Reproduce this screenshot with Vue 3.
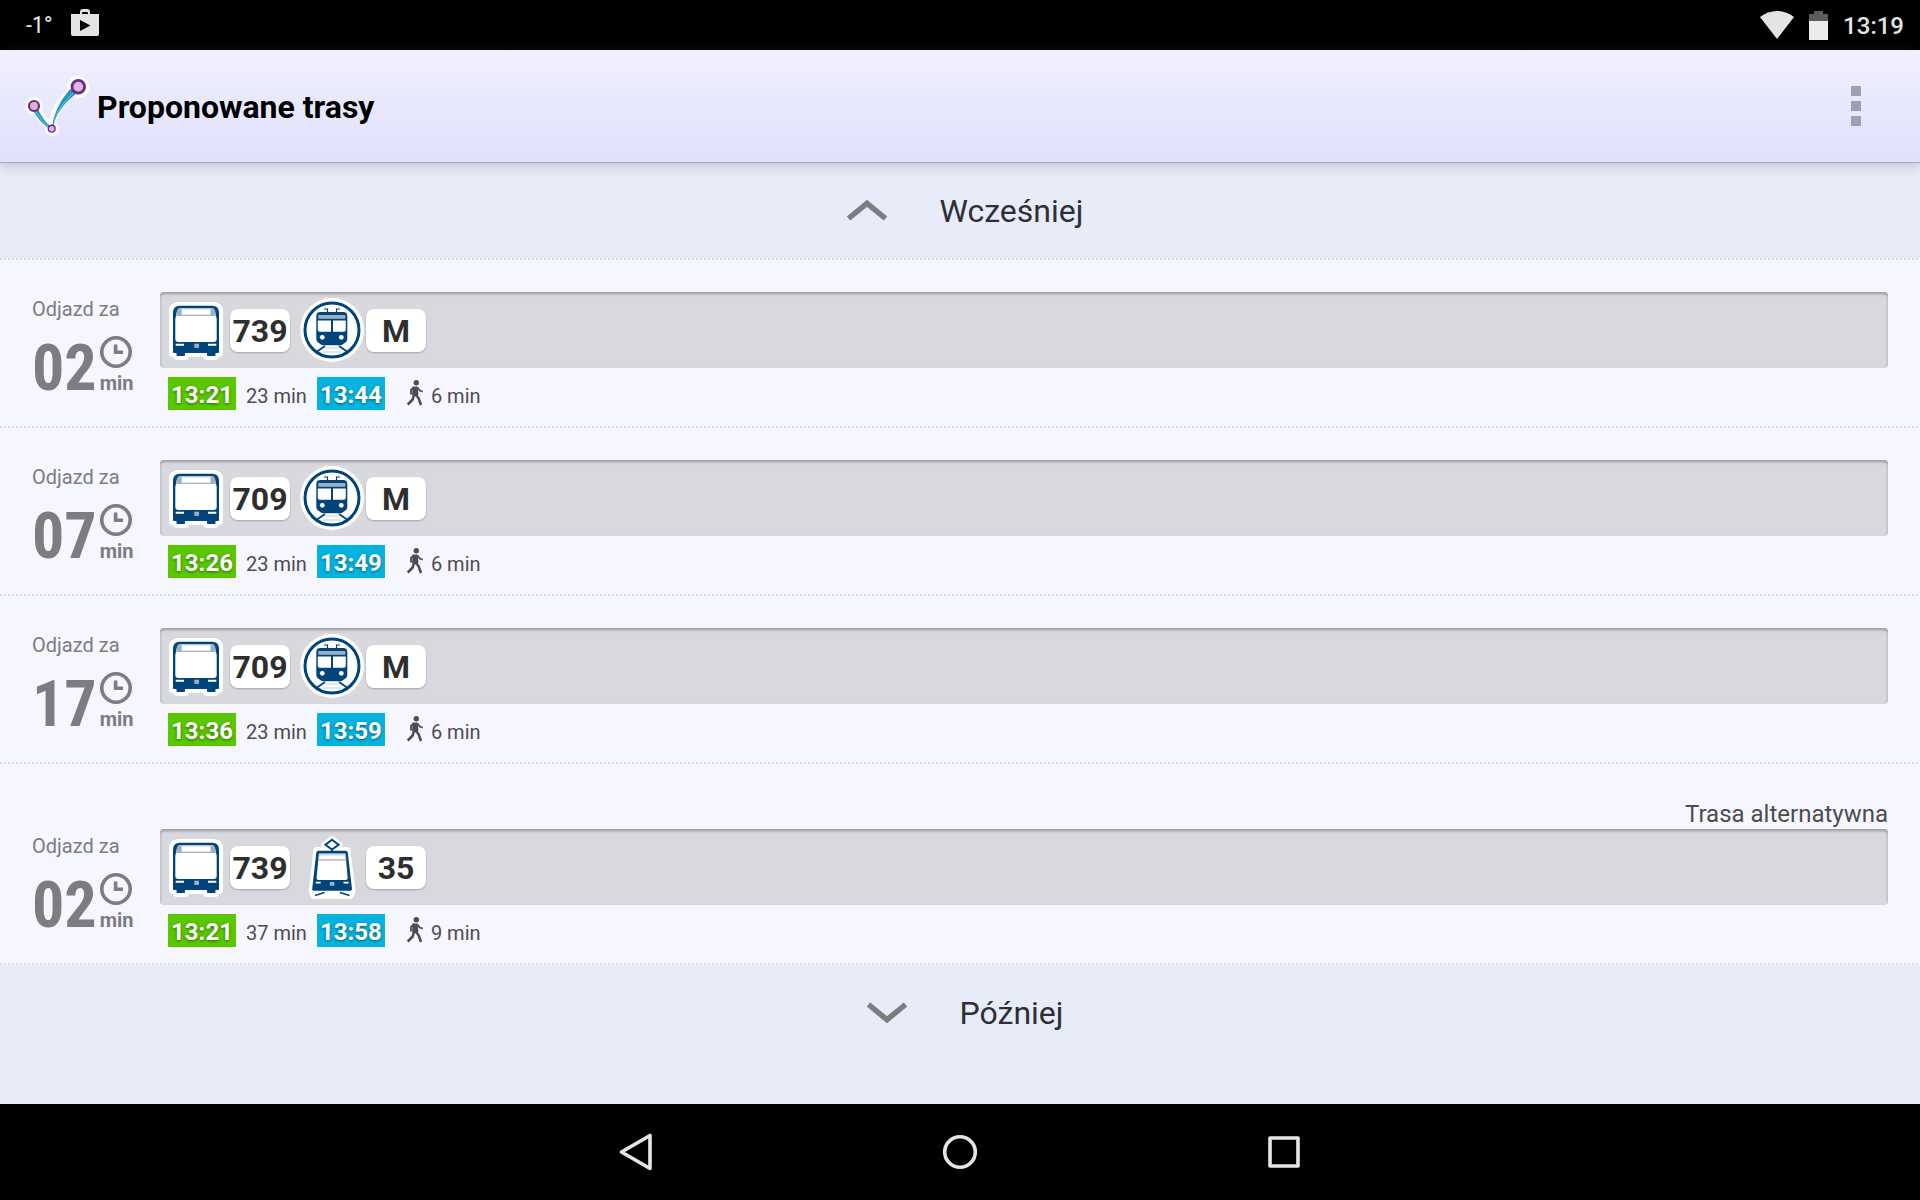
<script setup>
import { ref } from 'vue';

/**
 * routes:
 * - wait: minutes left to departure
 * - legs: vehicles in order (kind: bus | metro | tram)
 * - alt: label shown over an alternative route
 */
const routes = ref([
  {
    wait: '02', start: '13:21', ride: '23 min', end: '13:44', walk: '6 min',
    legs: [{ kind: 'bus', line: '739' }, { kind: 'metro', line: 'M' }]
  },
  {
    wait: '07', start: '13:26', ride: '23 min', end: '13:49', walk: '6 min',
    legs: [{ kind: 'bus', line: '709' }, { kind: 'metro', line: 'M' }]
  },
  {
    wait: '17', start: '13:36', ride: '23 min', end: '13:59', walk: '6 min',
    legs: [{ kind: 'bus', line: '709' }, { kind: 'metro', line: 'M' }]
  },
  {
    wait: '02', start: '13:21', ride: '37 min', end: '13:58', walk: '9 min', alt: 'Trasa alternatywna',
    legs: [{ kind: 'bus', line: '739' }, { kind: 'tram', line: '35' }]
  }
]);
</script>

<template>
  <div class="screen">
    <!-- system status bar -->
    <div class="status-bar">
      <div class="status-group left">
        <span class="temp">-1°</span>
        <svg class="store" width="28" height="28" viewBox="0 0 28 28">
          <path fill="#e4e4e4" fill-rule="evenodd" d="M0 5h9V3q0-3 3-3h4q3 0 3 3v2h9v20q0 2-2 2H2q-2 0-2-2zM11 5h6V4q0-1-1-1h-4q-1 0-1 1zM9 11v11l10.500-5.500z" />
        </svg>
      </div>
      <div class="status-group right">
        <svg width="34" height="28" viewBox="0 0 34 28">
          <path fill="#e4e4e4" d="M0 6C10-2 24-2 34 6L17 28z" />
        </svg>
        <svg width="19" height="29" viewBox="0 0 19 29">
          <path fill="#5c5c5c" d="M5 0h9v3h5v7H0V3h5z" />
          <path fill="#ececec" d="M0 10h19v19H0z" />
        </svg>
        <span class="clock-text">13:19</span>
      </div>
    </div>

    <!-- app bar -->
    <header class="app-bar">
      <svg class="logo" width="66" height="64" viewBox="24 74 66 64">
        <g fill="#fff" stroke="#fff" stroke-width="6" stroke-linejoin="round">
          <path d="M34 108Q40 120 51 129 56 104 77 90L71 90Q53 107 51 126 42 118 37 108z" />
          <circle cx="78" cy="87" r="8" />
          <circle cx="34" cy="106" r="6" />
          <circle cx="52" cy="129" r="4" />
        </g>
        <path fill="#2596be" d="M33 110Q39 122 50 129L51 127Q42 119 38 109zM53 127Q57 108 77 93L70 89Q54 108 52 127z" />
        <path fill="none" stroke="#7cc4da" d="M36 112Q41 121 49 127M54 121Q59 106 73 93" />
        <g fill="#dcb5dd" stroke="#6b2c87">
          <circle cx="78.300" cy="86.700" r="6.300" stroke-width="2.800" />
          <circle cx="34" cy="106" r="5" stroke-width="2.200" />
          <circle cx="51.700" cy="128.700" r="3.400" stroke-width="1.400" />
        </g>
      </svg>
      <h1>Proponowane trasy</h1>
      <button class="menu" type="button" aria-label="Menu">
        <i></i><i></i><i></i>
      </button>
    </header>

    <main>
      <button class="shift" type="button">
        <svg width="60" height="24" viewBox="0 0 60 24">
          <path fill="none" stroke="#7c7c81" stroke-width="5.500" d="M11.500 19.500L30 4.300l18.500 15.200" />
        </svg>
        <span>Wcześniej</span>
      </button>

      <ul class="routes">
        <li v-for="(r, idx) in routes" :key="idx" class="route">
          <div v-if="r.alt" class="alt">{{ r.alt }}</div>
          <div class="route-body">
            <div class="departure">
              <div class="caption">Odjazd za</div>
              <div class="wait">
                <strong>{{ r.wait }}</strong>
                <div class="unit">
                  <svg width="32" height="32" viewBox="0 0 32 32">
                    <circle cx="16" cy="16" r="14.200" fill="none" stroke="#7c7c81" stroke-width="3.600" />
                    <path fill="none" stroke="#7c7c81" stroke-width="3.600" d="M15.600 8.500V16.300H23" />
                  </svg>
                  <span>min</span>
                </div>
              </div>
            </div>

            <div class="details">
              <div class="track">
                <div v-for="leg in r.legs" :key="leg.kind" class="leg">
                  <svg v-if="leg.kind === 'bus'" width="64" height="64" viewBox="2 0 64 64">
                    <path fill="#fff" stroke="#fff" stroke-width="8" stroke-linejoin="round" d="M11 14q0-6 6-6h34q6 0 6 6v41h-4v3h-8v-3H23v3h-8v-3h-4z" />
                    <path fill="#014479" d="M11 15q0-7.300 7-7.300h32q7 0 7 7.300v39q0 1-1 1h-2.500v2q0 1-1 1H46q-1 0-1-1v-2H23v2q0 1-1 1h-6.500q-1 0-1-1v-2H12q-1 0-1-1z" />
                    <path fill="#fff" d="M13.300 21L15 13q.600-3 4-3h30q3.400 0 4 3l1.700 8v20q0 3-3 3H16.300q-3 0-3-3z" />
                    <path fill="#9fb0c3" d="M15 13q.600-2.700 4-2.700h30q3.400 0 4 2.700l.800 5H14.200z" />
                    <path fill="#fff" d="M19.700 11.300H48.500v5.400H19.700zM13.700 45.700h8.300v2h-8.300zM46 45.700h8.300v2H46z" />
                    <path fill="#9fb0c3" d="M32.300 45.700H37v4.200h-4.700z" />
                  </svg>
                  <svg v-else-if="leg.kind === 'metro'" width="64" height="64" viewBox="2 0 64 64">
                    <circle cx="34" cy="32" r="32" fill="#fff" />
                    <circle cx="34" cy="32" r="27" fill="none" stroke="#014479" stroke-width="3" />
                    <path fill="none" stroke="#014479" stroke-width="1.200" d="M29.500 15v-4h-3.500M38.500 15v-4H42" />
                    <path fill="#014479" d="M18.300 18q0-4 4-4h23q4 0 4 4v23q0 2-1.500 3.200-3.500 3-6 3H26q-3 0-6.200-3-1.500-1.200-1.500-3.200z" />
                    <path fill="#9fb0c3" d="M20.300 17h27v3.800h-27z" />
                    <path fill="#fff" d="M19.800 22.500H33v11.300H21.800q-2 0-2-2zM35 22.500h12.800v9.300q0 2-2 2H35z" />
                    <circle cx="24.300" cy="39.300" r="2.400" fill="#fff" />
                    <circle cx="43.300" cy="39.300" r="2.400" fill="#fff" />
                    <path fill="none" stroke="#014479" stroke-width="1.800" d="M27 48l-8 5.500M41 48l8 5.500" />
                    <path fill="none" stroke="#c3cdd9" d="M28 50h12M25 54h18" />
                  </svg>
                  <svg v-else width="64" height="64" viewBox="2 0 64 64">
                    <path fill="#fff" stroke="#fff" stroke-width="7" stroke-linejoin="round" d="M34 4.500l7 5.500-5 4v1.500h13L54 56l-2 4.500H16L14.300 56l4.500-40.500H32V14l-5-4z" />
                    <path fill="none" stroke="#014479" stroke-width="2" d="M34 4.800l6.600 5L34 14.500l-6.600-4.700zM34 14v3" />
                    <path fill="#014479" d="M20.500 15.700h27q2 0 2.300 2L54 54q0 1.700-1.500 1.700h-37Q14 55.700 14.200 54L18.300 17.700q.200-2 2.200-2z" />
                    <path fill="#fff" d="M21 18.500h26.500L49.700 43q0 2-2 2H20.500q-2 0-2-2z" />
                    <path fill="#9fb0c3" d="M20.600 19.500h27.300l.600 6H20z" />
                    <path fill="#fff" d="M21.500 20.300h25.500l.400 4H21z" />
                    <path fill="#fff" d="M17.700 46.800h5v1.800h-5zM45.500 46.800h5v1.800h-5z" />
                    <path fill="#9fb0c3" d="M31.800 47h4.600v3.800h-4.600z" />
                    <path fill="none" stroke="#014479" stroke-width="1.800" d="M17 60.500l9.500-3M51.500 60.500l-9.500-3" />
                  </svg>
                  <span class="line">{{ leg.line }}</span>
                </div>
              </div>

              <div class="times">
                <span class="time start">{{ r.start }}</span>
                <span class="ride">{{ r.ride }}</span>
                <span class="time end">{{ r.end }}</span>
                <svg class="walker" width="16" height="26" viewBox="0 0 16 26">
                  <circle cx="9.300" cy="2.700" r="2.700" fill="#4c4c50" />
                  <path fill="#4c4c50" d="M5.500 6.500h5l1 8-3 2-3.300-2z" />
                  <path fill="none" stroke="#4c4c50" stroke-width="1.800" stroke-linejoin="round" d="M6.500 7.500L4 10v4.500M10.500 7.500l2.200 3 3 1.200" />
                  <path fill="none" stroke="#4c4c50" stroke-width="2.500" d="M7 14l-1.300 5.500-5 5M8.500 14l3.200 4.500 2.300 6.500" />
                </svg>
                <span class="walk">{{ r.walk }}</span>
              </div>
            </div>
          </div>
        </li>
      </ul>

      <button class="shift" type="button">
        <svg width="60" height="24" viewBox="0 0 60 24">
          <path fill="none" stroke="#7c7c81" stroke-width="5.500" d="M11.500 3.500L30 18.700 48.500 3.500" />
        </svg>
        <span>Później</span>
      </button>
    </main>

    <!-- system navigation -->
    <nav class="nav-bar">
      <button type="button" aria-label="Wstecz">
        <svg width="40" height="40" viewBox="0 0 40 40">
          <path fill="none" stroke="#e6e6e6" stroke-width="3.600" stroke-linejoin="round" d="M34 3.500v33L5.500 20z" />
        </svg>
      </button>
      <button type="button" aria-label="Ekran główny">
        <svg width="40" height="40" viewBox="0 0 40 40">
          <circle cx="20" cy="20" r="15.300" fill="none" stroke="#e6e6e6" stroke-width="3.600" />
        </svg>
      </button>
      <button type="button" aria-label="Ostatnie">
        <svg width="40" height="40" viewBox="0 0 40 40">
          <rect x="6" y="6" width="28" height="28" fill="none" stroke="#e6e6e6" stroke-width="3.600" stroke-linejoin="round" />
        </svg>
      </button>
    </nav>
  </div>
</template>

<style>
body { margin:0; background:#000; }
</style>

<style scoped>
.screen { --muted:#7c7c81; --panel:#e8ebf8; display:flex; flex-direction:column; min-height:100vh; font-family:Roboto, "Noto Sans", sans-serif; color:#4c4c50; }
svg { display:block; flex:none; overflow:visible; }
button { border:0; padding:0; background:none; font:inherit; color:inherit; cursor:pointer; }

/* Status bar */
.status-bar { height:50px; padding:0 16px 0 26px; display:flex; justify-content:space-between; align-items:center; background:#000; color:#e4e4e4; }
.status-group { display:flex; align-items:center; }
.left { gap:18px; }
.right { gap:15px; }
.temp { font-family:"Roboto Condensed", sans-serif; font-size:24px; line-height:28px; }
.store { margin-bottom:4px; }
.clock-text { padding-top:1px; font-size:24px; line-height:28px; font-weight:500; }

/* App bar */
.app-bar { position:relative; height:112px; padding:0 32px 0 24px; display:flex; align-items:center; gap:7px; background:linear-gradient(#f0f0fe, #e0e0fd); border-bottom:1px solid #a9a9c9; box-shadow:0 2px 12px rgba(60,60,90,.25); }
.app-bar h1 { flex:1; margin:0; padding-top:2px; font-size:32px; line-height:40px; font-weight:700; color:#000; }
.menu { width:64px; height:64px; display:flex; flex-direction:column; align-items:center; justify-content:center; gap:5px; }
.menu i { width:10px; height:10px; background:#a09fae; }

main { flex:1; background:var(--panel); }

/* Earlier / later */
.shift { width:100%; height:95px; display:flex; align-items:center; justify-content:center; gap:43px; font-size:32px; line-height:40px; color:#2d2f36; }

/* Routes */
.routes { margin:0; padding:0; list-style:none; background:#f5f6fe; }
.route { padding-top:32px; background:repeating-linear-gradient(90deg, #d9dbe6 0 2px, transparent 2px 4px) left bottom / 100% 2px no-repeat; }
.route:first-child { background:repeating-linear-gradient(90deg, #d9dbe6 0 2px, transparent 2px 4px) left top / 100% 2px no-repeat, repeating-linear-gradient(90deg, #d9dbe6 0 2px, transparent 2px 4px) left bottom / 100% 2px no-repeat; padding-top:34px; }
.alt { padding:3px 32px 0; font-size:24px; line-height:30px; text-align:right; }
.route-body { display:grid; grid-template-columns:128px 1fr; padding:0 32px; }

.departure { padding-top:5px; color:var(--muted); }
.caption { font-size:20px; line-height:24px; }
.wait { display:flex; gap:3px; padding-top:15px; }
.wait strong { font-family:"Roboto Condensed", sans-serif; font-size:64px; line-height:66px; font-weight:700; }
.unit span { display:block; font-size:20px; line-height:30px; font-weight:700; }

.track { height:76px; box-sizing:border-box; padding:0 4px; display:flex; align-items:center; gap:10px; border-radius:4px; background:#d8d9de; box-shadow:inset 0 2px 3px rgba(0,0,0,.3); }
.leg { display:flex; align-items:center; gap:2px; }
.line { width:60px; height:43px; border-radius:8px; background:#fff; box-shadow:0 1px 2px rgba(0,0,0,.25); font-size:32px; line-height:45px; font-weight:700; text-align:center; color:#2e2e2e; }

.times { display:flex; align-items:center; padding:9px 8px 18px; font-size:20px; line-height:33px; }
.time { width:68px; height:33px; font-size:24px; line-height:36px; font-weight:700; text-align:center; color:#fff; text-shadow:0 1px 3px rgba(0,0,0,.5); }
.start { background:#5ac800; }
.end { background:#05b4de; }
.ride { padding:6px 10px 0; line-height:27px; }
.walker { margin:0 0 2px 22px; }
.walk { padding:6px 0 0 8px; line-height:27px; }

/* System navigation */
.nav-bar { height:96px; display:flex; align-items:center; justify-content:center; gap:224px; background:#000; }
.nav-bar button { width:100px; height:96px; display:flex; align-items:center; justify-content:center; }
</style>
